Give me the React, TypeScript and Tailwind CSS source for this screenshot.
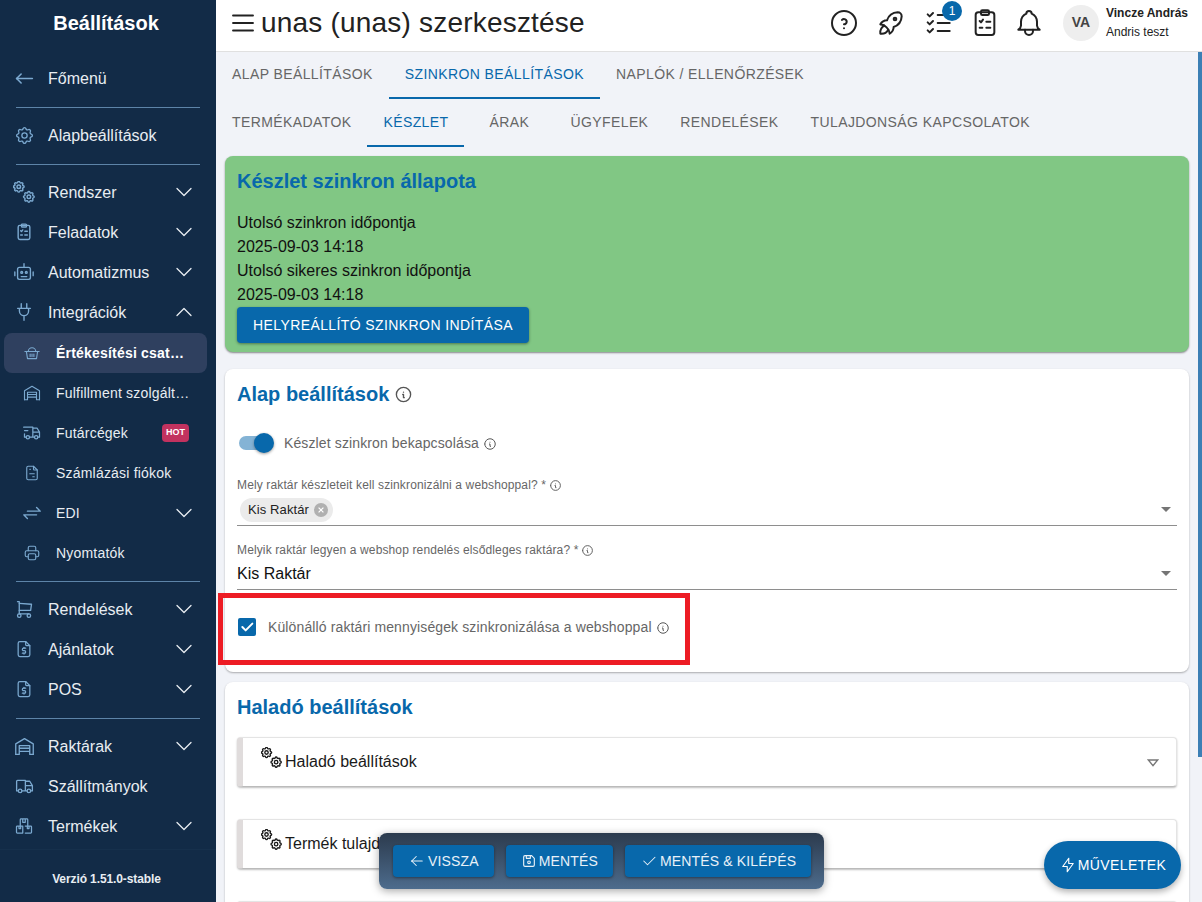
import React from 'react';
import {
    TbArrowLeft,
    TbArrowNarrowLeft,
    TbArrowsExchange,
    TbBell,
    TbBolt,
    TbCheck,
    TbChevronDown,
    TbChevronUp,
    TbDeviceFloppy,
    TbFileDollar,
    TbFileInvoice,
    TbHelpCircle,
    TbInfoCircle,
    TbListCheck,
    TbMenu2,
    TbPrinter,
    TbRocket,
    TbSettings,
    TbShoppingCart,
    TbTruck,
    TbTruckDelivery,
} from 'react-icons/tb';

const GEAR =
    'M10.325 4.317c.426 -1.756 2.924 -1.756 3.35 0a1.724 1.724 0 0 0 2.573 1.066c1.543 -.94 3.31 .826 2.37 2.37a1.724 1.724 0 0 0 1.065 2.572c1.756 .426 1.756 2.924 0 3.35a1.724 1.724 0 0 0 -1.066 2.573c.94 1.543 -.826 3.31 -2.37 2.37a1.724 1.724 0 0 0 -2.572 1.065c-.426 1.756 -2.924 1.756 -3.35 0a1.724 1.724 0 0 0 -2.573 -1.066c-1.543 .94 -3.31 -.826 -2.37 -2.37a1.724 1.724 0 0 0 -1.065 -2.572c-1.756 -.426 -1.756 -2.924 0 -3.35a1.724 1.724 0 0 0 1.066 -2.573c-.94 -1.543 .826 -3.31 2.37 -2.37c1 .608 2.296 .07 2.572 -1.065z';

const Gears = ({ className }: { className?: string }) => (
    <svg className={className} viewBox="0 0 24 24" fill="none" stroke="currentColor">
        <g transform="translate(-1.5 -1.5) scale(0.65)">
            <path d={GEAR} strokeWidth="2.4" />
            <circle cx="12" cy="12" r="3" strokeWidth="2.4" />
        </g>
        <g transform="translate(9.5 9.5) scale(0.65)">
            <path d={GEAR} strokeWidth="2.4" />
            <circle cx="12" cy="12" r="3" strokeWidth="2.4" />
        </g>
    </svg>
);

const RobotIcon = ({ className }: { className?: string }) => (
    <svg className={className} viewBox="0 0 24 24" fill="none" stroke="currentColor" strokeWidth="1.5" strokeLinecap="round" strokeLinejoin="round">
        <rect x="5" y="7" width="14" height="13" rx="2" />
        <path d="M12 7V3M2 12v4M22 12v4M9 17h6" />
        <circle cx="9.5" cy="12.500" r="1" />
        <circle cx="14.5" cy="12.500" r="1" />
    </svg>
);

const GarageIcon = ({ className }: { className?: string }) => (
    <svg className={className} viewBox="0 0 24 24" fill="none" stroke="currentColor" strokeWidth="1.5" strokeLinecap="round" strokeLinejoin="round">
        <path d="M2 21V9l10-6 10 6v12" />
        <path d="M6 21V11h12v10M6 14h12M6 17.500h12M2 21h4M18 21h4" />
    </svg>
);

const ChecklistIcon = ({ className, strokeWidth = 1.7 }: { className?: string; strokeWidth?: number }) => (
    <svg className={className} viewBox="0 0 24 24" fill="none" stroke="currentColor" strokeWidth={strokeWidth} strokeLinecap="round" strokeLinejoin="round">
        <rect x="5" y="4" width="14" height="17" rx="2" />
        <rect x="9" y="2.500" width="6" height="3.500" rx="1" />
        <path d="M8 10.500l1 1 1.500-2M13 11h3M8 15.500h2M13 15.500h3" />
    </svg>
);

const PlugIcon = ({ className }: { className?: string }) => (
    <svg className={className} viewBox="0 0 24 24" fill="none" stroke="currentColor" strokeWidth="1.5" strokeLinecap="round" strokeLinejoin="round">
        <path d="M9 3v5M15 3v5M5 8h14M7 8v3a5 5 0 0 0 10 0V8M12 16v5" />
    </svg>
);

const BasketIcon = ({ className }: { className?: string }) => (
    <svg className={className} viewBox="0 0 24 24" fill="none" stroke="currentColor" strokeWidth="1.5" strokeLinecap="round" strokeLinejoin="round">
        <path d="M2.500 10h19M4.500 10l1.500 9.500h12l1.500-9.500M7 10a5 5 0 0 1 10 0M9.500 13.500v3M12 13.500v3M14.500 13.500v3" />
    </svg>
);

const BoxesIcon = ({ className }: { className?: string }) => (
    <svg className={className} viewBox="0 0 24 24" fill="none" stroke="currentColor" strokeWidth="1.5" strokeLinecap="round" strokeLinejoin="round">
        <path d="M7.500 12V4.500a1 1 0 0 1 1-1h7a1 1 0 0 1 1 1V12M10.500 3.500v4h3v-4" />
        <path d="M10.500 12H4a1 1 0 0 0-1 1v6.500a1 1 0 0 0 1 1h6.500zM13.500 12H20a1 1 0 0 1 1 1v6.500a1 1 0 0 1-1 1h-6.500M6 12v3h2v-3M16 12v3h2v-3" />
    </svg>
);

const Divider = () => <div className="mx-4 mt-[9px] mb-[7px] h-px bg-[#5d84a8]" />;

interface NavItemProps {
    label: string;
    icon: React.ReactNode;
    open?: boolean;
    closed?: boolean;
}

const NavItem = ({ label, icon, open, closed }: NavItemProps) => (
    <div className="flex h-10 items-center text-[16px] text-[#e8edf2]">
        <div className="flex w-[48px] justify-center text-[#7ba9d0]">{icon}</div>
        <span className="flex-1 pt-[2px]">{label}</span>
        {closed && <TbChevronDown size={28} strokeWidth={1.1} className="mr-[18px] text-[#e8edf2]" />}
        {open && <TbChevronUp size={28} strokeWidth={1.1} className="mr-[18px] text-[#e8edf2]" />}
    </div>
);

interface SubItemProps {
    label: string;
    icon: React.ReactNode;
    active?: boolean;
    hot?: boolean;
    chevron?: boolean;
}

const SubItem = ({ label, icon, active, hot, chevron }: SubItemProps) => (
    <div className={`mx-1 flex h-10 w-[203px] items-center rounded-lg text-[14px] tracking-[0.2px] ${active ? 'bg-[#2f405f] font-bold text-white' : 'text-[#e8edf2]'}`}>
        <div className="flex w-[52px] justify-center pl-[4px] text-[#7ba9d0]">{icon}</div>
        <span className="min-w-0 flex-1 truncate">{label}</span>
        {hot && (
            <span className="mr-[18px] ml-2 rounded bg-[#c2325f] px-[4px] py-[2px] text-[9px] font-bold tracking-normal text-white">HOT</span>
        )}
        {chevron && <TbChevronDown size={28} strokeWidth={1.1} className="mr-[9px] text-[#e8edf2]" />}
        {!hot && !chevron && <span className="w-[16px] shrink-0" />}
    </div>
);

const Sidebar = () => (
    <aside className="flex h-full w-[216px] shrink-0 flex-col bg-[#122b47]">
        <div className="flex h-[58px] justify-center pt-[11px] pr-[4px] text-[20px] leading-6 font-bold text-white">Beállítások</div>
        <NavItem label="Főmenü" icon={<TbArrowNarrowLeft size={27} strokeWidth={1.4} />} />
        <Divider />
        <NavItem label="Alapbeállítások" icon={<TbSettings size={21} strokeWidth={1.5} />} />
        <Divider />
        <NavItem label="Rendszer" closed icon={<Gears className="h-[22px] w-[22px]" />} />
        <NavItem label="Feladatok" closed icon={<ChecklistIcon className="h-[20px] w-[20px]" />} />
        <NavItem label="Automatizmus" closed icon={<RobotIcon className="h-[22px] w-[22px]" />} />
        <NavItem label="Integrációk" open icon={<PlugIcon className="h-[22px] w-[22px]" />} />
        <div className="mt-px -mb-px">
            <SubItem label="Értékesítési csatornák" active icon={<BasketIcon className="h-[18px] w-[18px]" />} />
            <SubItem label="Fulfillment szolgáltatók" icon={<GarageIcon className="h-[18px] w-[18px]" />} />
            <SubItem label="Futárcégek" hot icon={<TbTruckDelivery size={20} strokeWidth={1.5} />} />
            <SubItem label="Számlázási fiókok" icon={<TbFileInvoice size={18} strokeWidth={1.5} />} />
            <SubItem label="EDI" chevron icon={<TbArrowsExchange size={22} strokeWidth={1.5} />} />
            <SubItem label="Nyomtatók" icon={<TbPrinter size={18} strokeWidth={1.5} />} />
        </div>
        <Divider />
        <NavItem label="Rendelések" closed icon={<TbShoppingCart size={21} strokeWidth={1.5} />} />
        <NavItem label="Ajánlatok" closed icon={<TbFileDollar size={20} strokeWidth={1.5} />} />
        <NavItem label="POS" closed icon={<TbFileDollar size={20} strokeWidth={1.5} />} />
        <Divider />
        <NavItem label="Raktárak" closed icon={<GarageIcon className="h-[21px] w-[21px]" />} />
        <NavItem label="Szállítmányok" icon={<TbTruck size={21} strokeWidth={1.5} />} />
        <NavItem label="Termékek" closed icon={<BoxesIcon className="h-[20px] w-[20px]" />} />
        <div className="mt-[3px] flex flex-1 justify-center border-t border-[#16304c] pt-[21px] pr-[3px] text-[12px] leading-4 font-bold tracking-[-0.1px] text-[#e8edf2]">
            Verzió 1.51.0-stable
        </div>
    </aside>
);

const Header = () => (
    <header className="flex h-[52px] shrink-0 items-center border-b border-[#e0e0e0] bg-white pr-[12px] pb-[6px] pl-[12px]">
        <TbMenu2 size={30} strokeWidth={1.5} className="text-[#222]" />
        <h1 className="ml-[3px] flex-1 text-[28px] leading-8 tracking-[0.2px] text-[#222]">unas (unas) szerkesztése</h1>
        <div className="flex items-center text-[#222]">
            <TbHelpCircle size={32} strokeWidth={1.5} />
            <TbRocket size={32} strokeWidth={1.5} className="ml-[15px]" />
            <div className="relative ml-[16px]">
                <TbListCheck size={32} strokeWidth={1.5} />
                <span className="absolute -top-[6px] -right-[7px] flex h-5 w-5 items-center justify-center rounded-full bg-[#0868ab] text-[12px] text-white">1</span>
            </div>
            <ChecklistIcon className="ml-[14px] h-8 w-8" strokeWidth={1.5} />
            <TbBell size={32} strokeWidth={1.5} className="ml-[12px]" />
        </div>
        <div className="ml-[18px] flex h-9 w-9 items-center justify-center rounded-full bg-[#eeeeee] text-[14px] font-bold text-[#444]">VA</div>
        <div className="ml-[7px] w-[84px] text-[12px] leading-[19px] whitespace-nowrap text-[#222]">
            <div className="font-bold">Vincze András</div>
            <div>Andris teszt</div>
        </div>
    </header>
);

const Tab = ({ label, active }: { label: string; active?: boolean }) => (
    <div className={`flex h-full min-w-[90px] items-center justify-center border-b-[2px] px-4 text-[14px] tracking-[0.4px] ${active ? 'border-[#0868ab] text-[#0868ab]' : 'border-transparent text-[#666]'}`}>
        {label}
    </div>
);

const Info = ({ size = 14 }: { size?: number }) => (
    <TbInfoCircle size={size} strokeWidth={1.7} className="inline-block shrink-0 text-[#555]" />
);

const Accordion = ({ label }: { label?: string }) => (
    <div className="flex h-[50px] rounded-[4px] border border-[#e4e4e4] border-b-[#bbbbbb] border-l-[6px] border-l-[#e0dcdc] bg-white shadow-[0_1px_2px_rgba(0,0,0,0.25)]">
        <div className="flex flex-1 items-start pt-[9px] pl-[18px] text-[16px] text-[#1a1a1a]">
            {label && (
                <>
                    <Gears className="mr-[3px] h-[21px] w-[21px]" />
                    <span className="mt-[6px] leading-[18px]">{label}</span>
                </>
            )}
        </div>
        <svg className="mt-[21px] mr-[17px] h-[8px] w-[12px] text-[#777]" viewBox="0 0 14 9" fill="none" stroke="currentColor" strokeWidth="1.600">
            <path d="M1.500 1h11L7 7.500z" />
        </svg>
    </div>
);

const Content = () => (
    <div className="flex min-h-0 flex-1 flex-col overflow-hidden bg-[#f1f3f8]">
        <div className="flex h-[47px] shrink-0">
            <Tab label="ALAP BEÁLLÍTÁSOK" />
            <Tab label="SZINKRON BEÁLLÍTÁSOK" active />
            <Tab label="NAPLÓK / ELLENŐRZÉSEK" />
        </div>
        <div className="flex h-[48px] shrink-0">
            <Tab label="TERMÉKADATOK" />
            <Tab label="KÉSZLET" active />
            <Tab label="ÁRAK" />
            <Tab label="ÜGYFELEK" />
            <Tab label="RENDELÉSEK" />
            <Tab label="TULAJDONSÁG KAPCSOLATOK" />
        </div>

        <section className="mt-[9px] mr-[13px] ml-[9px] h-[196px] shrink-0 rounded-lg bg-[#81c784] px-3 pt-3 shadow-[0_1px_2px_rgba(0,0,0,0.45)]">
            <h2 className="text-[20px] leading-[26px] font-bold text-[#0868ab]">Készlet szinkron állapota</h2>
            <div className="mt-[17px] text-[16px] leading-6 text-[#111]">
                <div>Utolsó szinkron időpontja</div>
                <div>2025-09-03 14:18</div>
                <div>Utolsó sikeres szinkron időpontja</div>
                <div>2025-09-03 14:18</div>
            </div>
            <button className="flex h-9 w-[292px] items-center justify-center rounded bg-[#0868ab] text-[14px] tracking-[0.4px] text-white shadow-[0_1px_3px_rgba(0,0,0,0.4)]">
                HELYREÁLLÍTÓ SZINKRON INDÍTÁSA
            </button>
        </section>

        <section className="mt-[17px] mr-[13px] ml-[9px] h-[303px] shrink-0 rounded-lg bg-white px-3 pt-[13px] shadow-[0_1px_2px_rgba(0,0,0,0.3)]">
            <h2 className="flex items-center gap-[5px] text-[20px] leading-6 font-bold text-[#0868ab]">
                Alap beállítások <Info size={19} />
            </h2>
            <div className="mt-[25px] flex h-6 items-center">
                <div className="relative ml-[2px] h-[14px] w-[34px] rounded-full bg-[#84b3d5]">
                    <div className="absolute -top-[3px] left-[15px] h-5 w-5 rounded-full bg-[#0868ab] shadow-[0_1px_3px_rgba(0,0,0,0.4)]" />
                </div>
                <span className="ml-[11px] text-[14px] tracking-[0.12px] text-[#666]">Készlet szinkron bekapcsolása</span>
                <span className="mt-px ml-1 flex"><Info size={14} /></span>
            </div>
            <div className="mt-[22px] flex h-[16px] items-center gap-[3px] text-[12px] tracking-[0.13px] text-[#666]">
                Mely raktár készleteit kell szinkronizálni a webshoppal? * <Info size={13} />
            </div>
            <div className="flex h-[33px] items-start border-b border-[#8e8e8e] pt-[5px]">
                <span className="ml-[3px] flex h-6 items-center rounded-full bg-[#ebebeb] pr-[5px] pl-2 text-[13px] tracking-[0.1px] text-[#222]">
                    Kis Raktár
                    <span className="ml-[5px] flex h-[14px] w-[14px] items-center justify-center rounded-full bg-[#b0b0b0] text-white">
                        <svg viewBox="0 0 10 10" className="h-[8px] w-[8px]" fill="none" stroke="currentColor" strokeWidth="1.500"><path d="M2 2l6 6M8 2l-6 6" /></svg>
                    </span>
                </span>
                <span className="mt-[9px] mr-[6px] ml-auto h-0 w-0 border-x-[5px] border-t-[5px] border-x-transparent border-t-[#757575]" />
            </div>
            <div className="mt-4 flex h-[16px] items-center gap-[3px] text-[12px] tracking-[0.13px] text-[#666]">
                Melyik raktár legyen a webshop rendelés elsődleges raktára? * <Info size={13} />
            </div>
            <div className="flex h-[32px] items-center border-b border-[#8e8e8e] text-[16px] text-[#111]">
                Kis Raktár
                <span className="mr-[6px] ml-auto h-0 w-0 border-x-[5px] border-t-[5px] border-x-transparent border-t-[#757575]" />
            </div>
            <div className="mt-[27px] flex h-5 items-center">
                <span className="ml-[1px] flex h-[18px] w-[18px] items-center justify-center rounded-[2px] bg-[#0868ab] text-white">
                    <TbCheck size={16} strokeWidth={3} />
                </span>
                <span className="ml-[12px] text-[14px] tracking-[0.12px] text-[#666]">Különálló raktári mennyiségek szinkronizálása a webshoppal</span>
                <span className="mt-px ml-1 flex"><Info size={14} /></span>
            </div>
        </section>

        <section className="mt-[10px] mr-[13px] ml-[9px] shrink-0 rounded-lg bg-white px-3 pt-[13px] shadow-[0_1px_2px_rgba(0,0,0,0.3)]">
            <h2 className="text-[20px] leading-6 font-bold text-[#0868ab]">Haladó beállítások</h2>
            <div className="mt-[18px] flex flex-col gap-8">
                <Accordion label="Haladó beállítások" />
                <Accordion label="Termék tulajdonságok" />
                <Accordion />
            </div>
        </section>
    </div>
);

const BarButton = ({ children }: { children: React.ReactNode }) => (
    <button className="flex h-8 shrink-0 items-center gap-[2px] rounded bg-[#0868ab] px-[15px] text-[14px] tracking-[0.15px] whitespace-nowrap text-[#e8f1f8] shadow-[0_1px_3px_rgba(0,0,0,0.4)]">
        {children}
    </button>
);

export default function App() {
    return (
        <div className="relative flex h-[902px] w-[1202px] overflow-hidden font-['Liberation_Sans',Arial,sans-serif]">
            <Sidebar />
            <main className="flex min-w-0 flex-1 flex-col">
                <Header />
                <Content />
            </main>

            {/* scrollbar thumb */}
            <div className="absolute top-[52px] right-0 h-[705px] w-1 bg-[#3c7fb5]" />

            {/* highlight frame from the annotated screenshot */}
            <div className="absolute top-[593px] left-[218px] h-[72px] w-[472px] border-[5px] border-[#ed1c24]" />

            {/* floating save bar */}
            <div className="absolute top-[833px] left-[379px] flex h-[56px] w-[445px] items-center gap-3 rounded-lg bg-gradient-to-b from-[#2c3b4e] to-[#4d6c8d] px-[14px] shadow-[0_2px_8px_rgba(0,0,0,0.35)]">
                <BarButton><TbArrowLeft size={18} strokeWidth={1.4} /> VISSZA</BarButton>
                <BarButton><TbDeviceFloppy size={16} strokeWidth={1.7} /> MENTÉS</BarButton>
                <BarButton><TbCheck size={18} strokeWidth={1.4} /> MENTÉS &amp; KILÉPÉS</BarButton>
            </div>

            <button className="absolute top-[841px] left-[1044px] flex h-12 w-[137px] items-center justify-center gap-[1px] rounded-full bg-[#0868ab] text-[14px] tracking-[0.4px] text-white shadow-[0_3px_6px_rgba(0,0,0,0.3)]">
                <TbBolt size={18} strokeWidth={1.5} /> MŰVELETEK
            </button>
        </div>
    );
}
